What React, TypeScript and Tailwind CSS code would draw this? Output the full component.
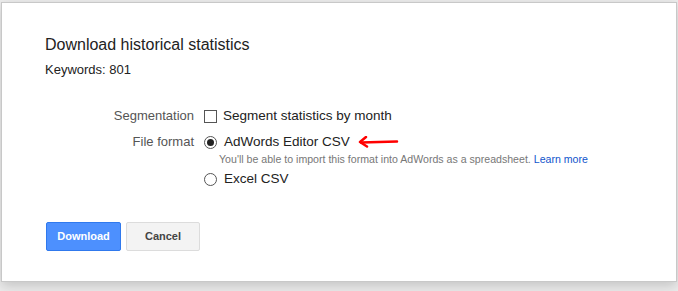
export default function App() {
  return (
    <div className="h-[291px] w-[678px] overflow-hidden bg-[#ededed] pl-[1px] pr-[1px] pt-[2px] font-['Liberation_Sans',Arial,sans-serif]">
      <div className="h-[280px] border border-[#c8c8c8] bg-white pl-[43px] pt-[32px] shadow-[0_4px_12px_rgba(0,0,0,0.18)]">
        <h1 className="text-[16px] leading-[20px] text-[#222]">Download historical statistics</h1>
        <p className="mt-[7px] text-[13px] leading-[16px] text-[#222]">Keywords: 801</p>

        <div className="mt-[29px] grid grid-cols-[149px_1fr] gap-x-[10px] text-[13px] text-[#222]">
          <div className="text-right leading-[18px] text-[#555]">Segmentation</div>
          <label className="flex items-center gap-[6px] leading-[18px]">
            <span className="h-[13px] w-[13px] border border-[#555] bg-white" />
            <span className="text-[13.5px]">Segment statistics by month</span>
          </label>

          <div className="mt-[8px] text-right leading-[18px] text-[#555]">File format</div>
          <div className="mt-[8px]">
            <div className="flex items-center gap-[7px] leading-[18px]">
              <span className="flex h-[13px] w-[13px] items-center justify-center rounded-full border border-[#555] bg-white">
                <span className="h-[7px] w-[7px] rounded-full bg-[#222]" />
              </span>
              <span className="text-[13.5px]">AdWords Editor CSV</span>
              <svg width="42" height="12" viewBox="0 0 42 12">
                <path d="M40 5.5 L4 6.5" stroke="#f00" strokeWidth="2.5" strokeLinecap="round" fill="none" />
                <path d="M9 1 L3 6 L10 10.5" stroke="#f00" strokeWidth="2.5" strokeLinecap="round" strokeLinejoin="round" fill="none" />
              </svg>
            </div>
            <div className="mt-[1px] pl-[15px] text-[10.6px] leading-[14px] text-[#777]">
              You'll be able to import this format into AdWords as a spreadsheet.{' '}
              <a className="text-[#15c]">Learn more</a>
            </div>
            <div className="mt-[4px] flex items-center gap-[7px] leading-[18px]">
              <span className="h-[13px] w-[13px] rounded-full border border-[#555] bg-white" />
              <span className="text-[13.5px]">Excel CSV</span>
            </div>
          </div>
        </div>

        <div className="ml-[1px] mt-[34px] flex gap-[5px]">
          <button className="h-[29px] w-[75px] rounded-[2px] border border-[#3079ed] bg-[#4d90fe] text-[11px] font-bold text-white">
            Download
          </button>
          <button className="h-[29px] w-[74px] rounded-[2px] border border-[#dcdcdc] bg-[#f3f3f3] text-[11px] font-bold text-[#444]">
            Cancel
          </button>
        </div>
      </div>
    </div>
  )
}
